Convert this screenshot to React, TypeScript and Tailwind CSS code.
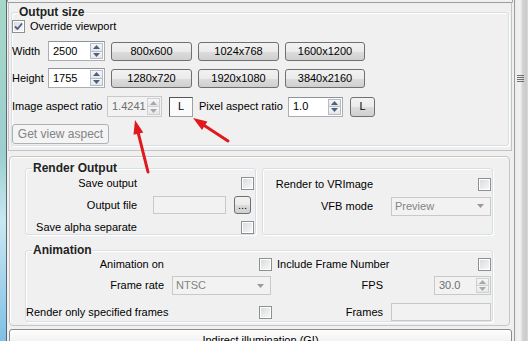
import React from 'react';

function Checkbox({ checked = false }: { checked?: boolean }) {
  return (
    <span className="block w-[13px] h-[13px] shrink-0 border border-[#8e8f8f] bg-white p-px">
      <span className="flex w-full h-full items-center justify-center bg-gradient-to-br from-[#d9dce0] to-[#f7f7f7]">
        {checked && (
          <svg width="9" height="9" viewBox="0 0 9 9">
            <path d="M1 4.5 L3.5 7 L8 1.5" fill="none" stroke="#4a5b88" strokeWidth="1.8" />
          </svg>
        )}
      </span>
    </span>
  );
}

function Button({ label, className = '', disabled = false }: { label: string; className?: string; disabled?: boolean }) {
  return (
    <div
      className={`flex items-center justify-center shrink-0 rounded-[3px] border ${
        disabled
          ? 'border-[#adb2b5] bg-[#f4f4f4] text-[#838383]'
          : 'border-[#707070] bg-[linear-gradient(#f2f2f2_0%,#ebebeb_50%,#dddddd_50%,#cfcfcf_100%)] text-black'
      } ${className}`}
    >
      {label}
    </div>
  );
}

function SpinArrows({ disabled = false }: { disabled?: boolean }) {
  const c = disabled ? '#a8a8a8' : '#4c607f';
  const b = disabled ? 'border-[#d0d0d0]' : 'border-[#b6bcc6]';
  return (
    <div className="flex flex-col w-[13px] my-px mr-px">
      <div className={`flex-1 flex items-center justify-center border ${b} bg-[linear-gradient(#f6f6f6,#e4e7ea)]`}>
        <svg width="7" height="4" viewBox="0 0 7 4"><path d="M0 4 L3.5 0 L7 4 Z" fill={c} /></svg>
      </div>
      <div className={`flex-1 flex items-center justify-center border border-t-0 ${b} bg-[linear-gradient(#f6f6f6,#e4e7ea)]`}>
        <svg width="7" height="4" viewBox="0 0 7 4"><path d="M0 0 L7 0 L3.5 4 Z" fill={c} /></svg>
      </div>
    </div>
  );
}

function Spinner({ value, className = '', disabled = false }: { value: string; className?: string; disabled?: boolean }) {
  return (
    <div
      className={`flex shrink-0 border ${
        disabled ? 'border-[#c9c9c9] bg-[#f2f2f2] text-[#6d6d6d]' : 'border-[#abadb3] border-t-[#8e939b] bg-white text-black'
      } ${className}`}
    >
      <div className="flex-1 flex items-center pl-[4px]">{value}</div>
      <SpinArrows disabled={disabled} />
    </div>
  );
}

function Combo({ value, className = '' }: { value: string; className?: string }) {
  return (
    <div className={`flex shrink-0 items-center border border-[#c9c9c9] bg-[#f2f2f2] text-[#838383] ${className}`}>
      <div className="flex-1 pl-[3px]">{value}</div>
      <svg className="mr-[6px]" width="7" height="4" viewBox="0 0 7 4"><path d="M0 0 L7 0 L3.5 4 Z" fill="#9a9a9a" /></svg>
    </div>
  );
}

function TextBox({ className = '' }: { className?: string }) {
  return <div className={`shrink-0 border border-[#c9c9c9] bg-[#f2f2f2] ${className}`} />;
}

function Group({ title, className = '', children }: { title?: string; className?: string; children: React.ReactNode }) {
  return (
    <fieldset className={`rounded-[3px] border border-[#d5dfe5] shadow-[inset_1px_1px_0_#fff,1px_1px_0_#fff] ${className}`}>
      {title && (
        <legend className="ml-[6px] px-px text-[12px] leading-[14px] font-bold text-[#222]">{title}</legend>
      )}
      {children}
    </fieldset>
  );
}

function Arrows() {
  return (
    <svg className="absolute inset-0 pointer-events-none" width="528" height="341" viewBox="0 0 528 341">
      <g stroke="#e0191f" strokeWidth="3" strokeLinecap="round">
        <line x1="148" y1="172" x2="138.4" y2="133.6" />
        <line x1="228" y1="141" x2="204.7" y2="125.7" />
      </g>
      <g fill="#e0191f">
        <polygon points="135,120 143.3,132.4 133.5,134.8" />
        <polygon points="193,118 207.4,121.5 202,129.9" />
      </g>
    </svg>
  );
}

export default function App() {
  return (
    <div className="relative flex w-[528px] h-[341px] overflow-hidden bg-[#f0f0f0] text-[11px] leading-[13px] text-black font-['Liberation_Sans',Arial,sans-serif]">
      <div className="w-[6px] shrink-0 bg-[linear-gradient(#a6d8c8_0%,#9ccfcf_45%,#c8e8f2_65%,#7fc0e6_100%)]" />
      <div className="w-px shrink-0 bg-[#5c666b]" />

      <div className="w-[507px] shrink-0 flex flex-col">
        <div className="h-[3px] shrink-0 mr-px border-x border-b border-[#9c9c9c] rounded-b-[2px]" />

        <div className="h-[148px] shrink-0 ml-px mr-[2px] px-[2px] pt-[2px] border-x border-b border-[#c4c4c4]">
          <Group title="Output size" className="pb-px">
            <div className="flex items-center h-[14px] gap-[5px]">
              <Checkbox checked />
              <span>Override viewport</span>
            </div>

            <div className="flex items-center h-[20px] mt-[8px]">
              <span className="w-[36px]">Width</span>
              <Spinner value="2500" className="w-[57px] h-[20px]" />
              <Button label="800x600" className="ml-[6px] w-[81px] h-[19px]" />
              <Button label="1024x768" className="ml-[6px] w-[81px] h-[19px]" />
              <Button label="1600x1200" className="ml-[6px] w-[80px] h-[19px]" />
            </div>

            <div className="flex items-center h-[20px] mt-[7px]">
              <span className="w-[36px]">Height</span>
              <Spinner value="1755" className="w-[57px] h-[20px]" />
              <Button label="1280x720" className="ml-[6px] w-[81px] h-[19px]" />
              <Button label="1920x1080" className="ml-[6px] w-[81px] h-[19px]" />
              <Button label="3840x2160" className="ml-[6px] w-[80px] h-[19px]" />
            </div>

            <div className="flex items-center h-[21px] mt-[8px]">
              <span className="w-[95px]">Image aspect ratio</span>
              <Spinner value="1.4241" disabled className="w-[55px] h-[21px]" />
              <div className="ml-[7px] w-[24px] h-[20px] flex items-center justify-center border border-[#a0a0a0] border-t-[#555] border-l-[#555] bg-[#fbfbfb]">
                L
              </div>
              <span className="ml-[6px] w-[89px]">Pixel aspect ratio</span>
              <Spinner value="1.0" className="w-[55px] h-[20px]" />
              <Button label="L" className="ml-[7px] w-[25px] h-[20px]" />
            </div>

            <Button label="Get view aspect" disabled className="mt-[7px] w-[97px] h-[20px] text-[12px]" />
          </Group>
        </div>

        <div className="shrink-0 mt-[5px] ml-[2px] mr-[4px] h-[170px] pt-[4px] pl-[15px] pr-[16px] border border-[#c6c6c6] rounded-[4px] shadow-[inset_1px_1px_0_#fff]">
          <div className="flex items-start gap-[6px]">
            <Group title="Render Output" className="w-[231px] h-[74px]">
              <div className="flex items-center h-[14px] mt-px">
                <span className="w-[111px] text-right">Save output</span>
                <span className="flex-1" />
                <span className="mr-px"><Checkbox /></span>
              </div>
              <div className="flex items-center h-[18px] mt-[6px]">
                <span className="w-[111px] text-right">Output file</span>
                <TextBox className="ml-[16px] w-[73px] h-[18px]" />
                <Button label="..." className="ml-[8px] w-[17px] h-[18px] text-[#666]" />
              </div>
              <div className="flex items-center h-[14px] mt-[6px]">
                <span className="w-[111px] text-right">Save alpha separate</span>
                <span className="flex-1" />
                <span className="mr-px"><Checkbox /></span>
              </div>
            </Group>

            <Group className="mt-[7px] w-[231px] h-[67px]">
              <div className="flex items-center h-[14px] mt-[8px]">
                <span className="w-[110px] text-right">Render to VRImage</span>
                <span className="flex-1" />
                <span className="mr-px"><Checkbox /></span>
              </div>
              <div className="flex items-center h-[18px] mt-[6px]">
                <span className="w-[110px] text-right">VFB mode</span>
                <span className="flex-1" />
                <Combo value="Preview" className="mr-px w-[100px] h-[19px]" />
              </div>
            </Group>
          </div>

          <Group title="Animation" className="mt-[8px] w-[468px] h-[79px]">
            <div className="flex items-center h-[14px]">
              <span className="w-[138px] text-right">Animation on</span>
              <span className="ml-[95px]"><Checkbox /></span>
              <span className="ml-[5px] flex-1">Include Frame Number</span>
              <span className="mr-px"><Checkbox /></span>
            </div>
            <div className="flex items-center h-[19px] mt-[5px]">
              <span className="w-[138px] text-right">Frame rate</span>
              <Combo value="NTSC" className="ml-[8px] w-[99px] h-[19px]" />
              <span className="w-[112px] text-right">FPS</span>
              <span className="flex-1" />
              <Spinner value="30.0" disabled className="mr-px w-[57px] h-[19px]" />
            </div>
            <div className="flex items-center h-[18px] mt-[8px]">
              <span className="w-[138px] text-right whitespace-nowrap">Render only specified frames</span>
              <span className="ml-[95px]"><Checkbox /></span>
              <span className="w-[111px] text-right">Frames</span>
              <TextBox className="ml-[8px] w-[100px] h-[18px]" />
            </div>
          </Group>
        </div>

        <div className="shrink-0 mt-[3px] ml-[2px] mr-[2px] h-[20px] pt-[4px] text-center border border-[#8c8c8c] rounded-t-[3px] bg-[linear-gradient(#fdfdfd,#ececec)]">
          Indirect illumination (GI)
        </div>
      </div>

      <div className="w-[14px] shrink-0 flex flex-col items-center justify-start border-l border-[#9a9a9a] bg-[linear-gradient(to_right,#ececec_0%,#f2f2f2_40%,#d2d2d2_60%,#cbcbcb_90%,#e0e0e0_100%)]">
        <div className="mt-[75px] flex flex-col gap-px w-[7px] mr-[2px]">
          <div className="h-px bg-[#6f6f6f]" />
          <div className="h-px bg-[#6f6f6f]" />
          <div className="h-px bg-[#6f6f6f]" />
          <div className="h-px bg-[#6f6f6f]" />
        </div>
      </div>

      <Arrows />
    </div>
  );
}
